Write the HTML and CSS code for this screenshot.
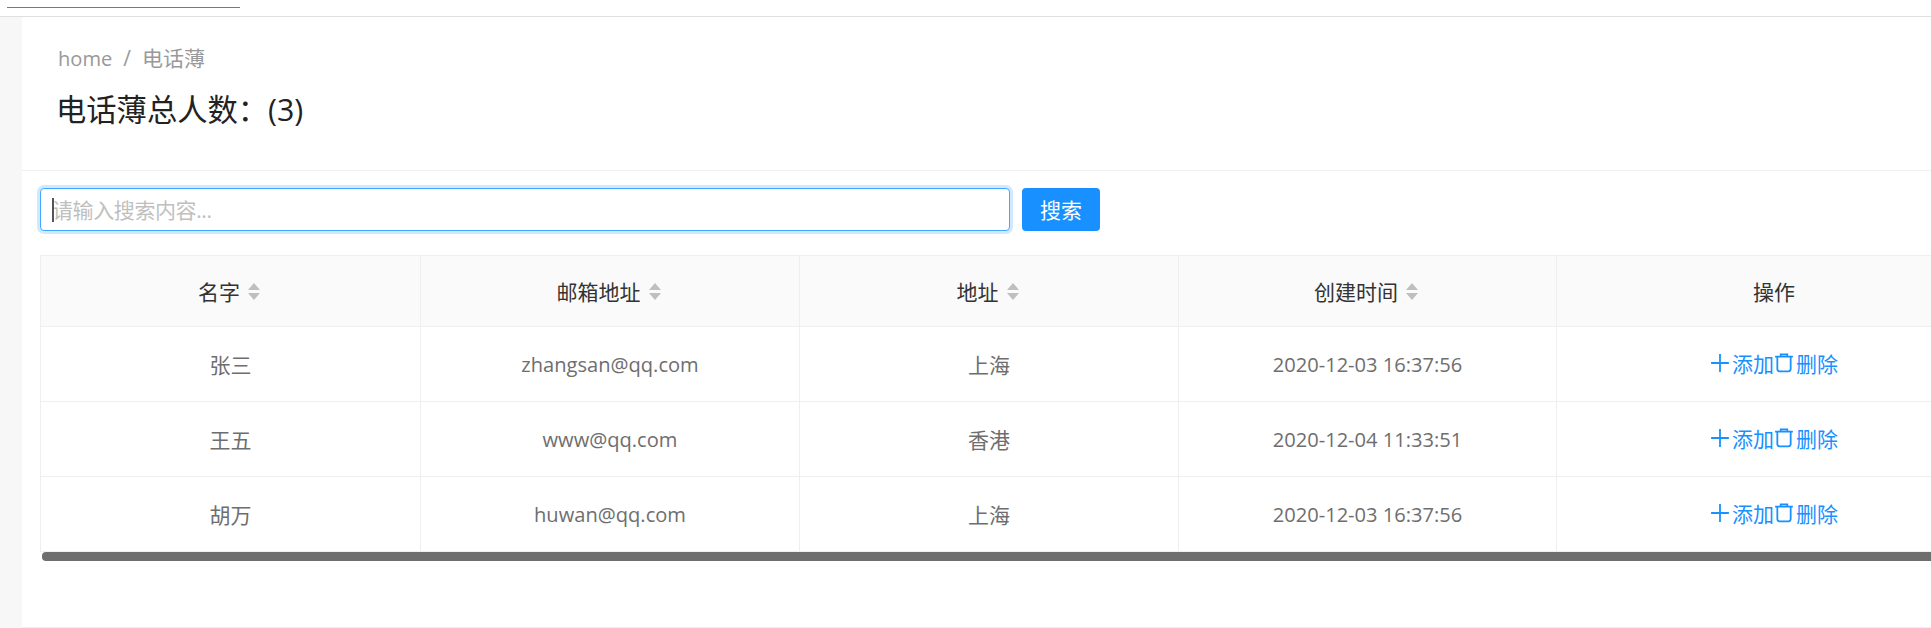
FILE: index.html
```html
<!DOCTYPE html>
<html>
<head>
  <title>电话薄</title>
  <link rel="stylesheet" href="styles.css">
</head>
<body>
  <div class="top-bar">
    <div class="top-tab"></div>
  </div>
  <div class="layout">
    <div class="side"></div>
    <div class="content">
      <div class="page-head">
        <div class="crumb"><span class="latin">home</span><span class="crumb-sep">/</span><span>电话薄</span></div>
        <h1 class="page-title">电话薄总人数：(3)</h1>
      </div>
      <form class="search">
        <div class="search-box">
          <input type="text" class="search-input" placeholder="请输入搜索内容...">
          <span class="caret"></span>
        </div>
        <button type="button" class="search-button">搜索</button>
      </form>
      <div class="table-wrap">
        <table class="people">
          <colgroup>
            <col class="col-1"><col class="col"><col class="col"><col class="col-4"><col class="col-last">
          </colgroup>
          <thead>
            <tr>
              <th><span class="th-inner">名字<i class="sorter"><b class="up"></b><b class="down"></b></i></span></th>
              <th><span class="th-inner">邮箱地址<i class="sorter"><b class="up"></b><b class="down"></b></i></span></th>
              <th><span class="th-inner">地址<i class="sorter"><b class="up"></b><b class="down"></b></i></span></th>
              <th><span class="th-inner">创建时间<i class="sorter"><b class="up"></b><b class="down"></b></i></span></th>
              <th>操作</th>
            </tr>
          </thead>
          <tbody>
            <tr>
              <td>张三</td><td class="latin">zhangsan@qq.com</td><td>上海</td><td class="latin">2020-12-03 16:37:56</td>
              <td><div class="actions">
                <a class="action" href="#"><svg class="icon" viewBox="0 0 18 18"><path d="M9 1v16M1 9h16"/></svg>添加</a>
                <a class="action" href="#"><svg class="icon" viewBox="0 0 18 18"><path d="M6 3V1.2h6V3M1 3.2h16M3 3.2v11.3a2 2 0 0 0 2 2h8a2 2 0 0 0 2-2V3.2"/></svg>删除</a>
              </div></td>
            </tr>
            <tr>
              <td>王五</td><td class="latin">www@qq.com</td><td>香港</td><td class="latin">2020-12-04 11:33:51</td>
              <td><div class="actions">
                <a class="action" href="#"><svg class="icon" viewBox="0 0 18 18"><path d="M9 1v16M1 9h16"/></svg>添加</a>
                <a class="action" href="#"><svg class="icon" viewBox="0 0 18 18"><path d="M6 3V1.2h6V3M1 3.2h16M3 3.2v11.3a2 2 0 0 0 2 2h8a2 2 0 0 0 2-2V3.2"/></svg>删除</a>
              </div></td>
            </tr>
            <tr>
              <td>胡万</td><td class="latin">huwan@qq.com</td><td>上海</td><td class="latin">2020-12-03 16:37:56</td>
              <td><div class="actions">
                <a class="action" href="#"><svg class="icon" viewBox="0 0 18 18"><path d="M9 1v16M1 9h16"/></svg>添加</a>
                <a class="action" href="#"><svg class="icon" viewBox="0 0 18 18"><path d="M6 3V1.2h6V3M1 3.2h16M3 3.2v11.3a2 2 0 0 0 2 2h8a2 2 0 0 0 2-2V3.2"/></svg>删除</a>
              </div></td>
            </tr>
          </tbody>
        </table>
        <div class="scroll-thumb"></div>
      </div>
    </div>
  </div>
</body>
</html>
```

FILE: styles.css
```css
html, body {
  margin: 0;
  height: 100%;
  overflow: hidden;
  background: #fff;
  font-family: "Open Sans", "Noto Sans CJK SC", sans-serif;
  font-size: 21px;
  color: #6e6e6e;
}
.latin {
  font-size: 20.1px;
}
.top-bar {
  height: 16px;
  border-bottom: 1px solid #e0e0e0;
  padding-left: 7px;
}
.top-tab {
  width: 233px;
  height: 7px;
  border-bottom: 1px solid #1890ff;
}
.layout {
  display: flex;
  height: 611px;
}
.side {
  flex: 0 0 22px;
  background: #f7f7f7;
}
.content {
  flex: 1;
  min-width: 0;
  border-bottom: 1px solid #f0f0f0;
  box-sizing: border-box;
  overflow: hidden;
}
.page-head {
  height: 154px;
  box-sizing: border-box;
  padding: 25px 0 0 36px;
  border-bottom: 1px solid #f0f0f0;
}
.crumb {
  line-height: 32px;
  color: #999;
}
.crumb-sep {
  margin: 0 11px;
}
.page-title {
  margin: 13px 0 0 -2px;
  font-size: 30.3px;
  font-weight: 400;
  line-height: 44px;
  color: #222;
}
.search {
  display: flex;
  gap: 12px;
  padding: 17px 0 0 18px;
}
.search-box {
  position: relative;
  width: 970px;
  height: 43px;
}
.search-input {
  width: 100%;
  height: 100%;
  box-sizing: border-box;
  padding: 0 11px;
  border: 1px solid #40a9ff;
  border-radius: 4px;
  box-shadow: 0 0 0 3px rgba(24, 144, 255, .2);
  outline: none;
  font: inherit;
}
.search-input::placeholder {
  color: #bfbfbf;
  opacity: 1;
  letter-spacing: -.4px;
}
.caret {
  position: absolute;
  left: 12px;
  top: 10px;
  width: 2px;
  height: 24px;
  background: #555;
}
.search-button {
  width: 78px;
  height: 43px;
  padding: 0 0 2px;
  border: 0;
  border-radius: 4px;
  background: #1890ff;
  color: #fff;
  font: inherit;
}
.table-wrap {
  position: relative;
  margin: 24px 0 0 18px;
  width: 1951px;
  height: 306px;
}
.people {
  table-layout: fixed;
  width: 1951px;
  border-collapse: separate;
  border-spacing: 0;
  border-top: 1px solid #efefef;
  border-left: 1px solid #efefef;
  text-align: center;
}
.col-1 {
  width: 380px;
}
.col {
  width: 379px;
}
.col-4 {
  width: 378px;
}
.col-last {
  width: 435px;
}
.people th {
  height: 70px;
  padding: 0;
  background: #fafafa;
  font-weight: 400;
  color: #333;
  border-right: 1px solid #efefef;
  border-bottom: 1px solid #efefef;
}
.people td {
  height: 74px;
  padding: 0;
  border-right: 1px solid #efefef;
  border-bottom: 1px solid #efefef;
}
.th-inner {
  display: inline-flex;
  align-items: center;
  gap: 8px;
  padding-right: 3px;
}
.sorter {
  display: inline-flex;
  flex-direction: column;
  gap: 3px;
}
.up, .down {
  display: block;
  width: 0;
  height: 0;
  border-left: 6.5px solid transparent;
  border-right: 6.5px solid transparent;
}
.up {
  border-bottom: 7px solid #bfbfbf;
}
.down {
  border-top: 7px solid #bfbfbf;
}
.actions {
  display: flex;
  justify-content: center;
  position: relative;
  top: -1px;
}
.action {
  display: flex;
  align-items: center;
  color: #1890ff;
  text-decoration: none;
}
.icon {
  flex: none;
  width: 20px;
  height: 20px;
  margin-right: 2px;
  fill: none;
  stroke: #1890ff;
  stroke-width: 1.6;
}
.scroll-thumb {
  position: absolute;
  left: 2px;
  right: 0;
  bottom: 0;
  height: 9px;
  border-radius: 4px 0 0 4px;
  background: #6e6e6e;
}
```
